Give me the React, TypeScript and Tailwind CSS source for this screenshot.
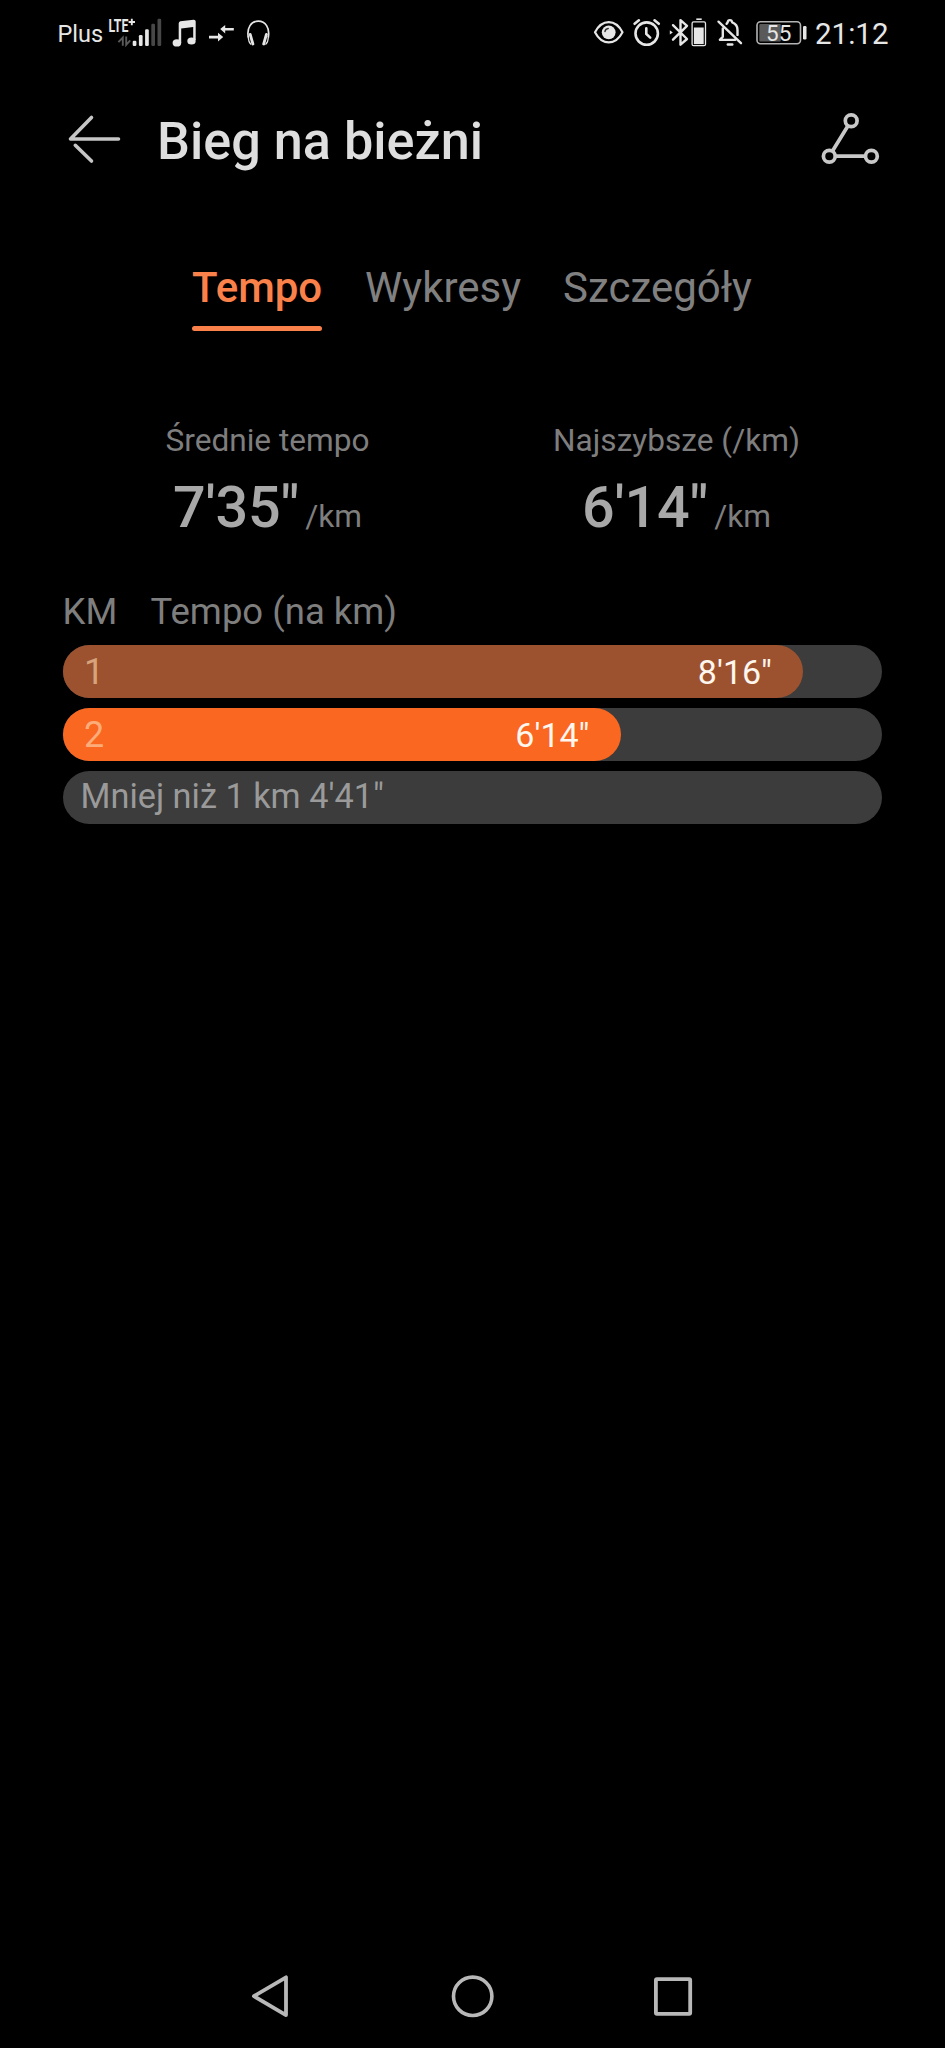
import React from "react";

const INK = "#e6e6e6";

function Signal() {
  return (
    <svg width="58" height="40" viewBox="107 14 58 40" className="shrink-0">
      <text x="108.6" y="31.8" fontSize="17.5" fontWeight="700" fill={INK} textLength="19.8" lengthAdjust="spacingAndGlyphs">LTE</text>
      <path d="M128.6 22h6.4M131.8 18.8v6.4" stroke={INK} strokeWidth="1.9" />
      <path d="M122.8 45.8V37.6l-4.4 4.6M126.2 36.6v8.2l4-4.4" stroke="#5a5a5a" strokeWidth="1.9" fill="none" />
      <g fill={INK}>
        <rect x="132.7" y="40.8" width="3.7" height="5.1" rx="1.2" />
        <rect x="138.9" y="35" width="3.7" height="10.9" rx="1.2" />
        <rect x="145.1" y="29.3" width="3.7" height="16.6" rx="1.2" />
      </g>
      <g fill="#474747">
        <rect x="151.3" y="23.8" width="3.7" height="22.1" rx="1.2" />
        <rect x="157.5" y="18.8" width="3.7" height="27.1" rx="1.2" />
      </g>
    </svg>
  );
}

function Music() {
  return (
    <svg width="40" height="40" viewBox="165 14 40 40" className="shrink-0" fill={INK}>
      <path d="M178.7 23.2q.1-1.6 1.7-1.9l13.2-1.6q2.1-.1 2.1 1.8V40h-2.5V27l-12 1.5V43h-2.5z" />
      <ellipse cx="176.9" cy="42.9" rx="4.3" ry="3.6" />
      <ellipse cx="191.5" cy="40.9" rx="4.2" ry="3.5" />
    </svg>
  );
}

function DataArrows() {
  return (
    <svg width="35" height="40" viewBox="205 14 35 40" className="shrink-0" fill={INK}>
      <path d="M209 35.8h9v-3l5.2 4.3-5.2 4.3v-3h-9zM233.8 27.9h-8.6v-3l-5 4.2 5 4.3v-3h8.6z" />
    </svg>
  );
}

function Headphones() {
  return (
    <svg width="35" height="40" viewBox="240 14 35 40" className="shrink-0" fill="none" stroke={INK}>
      <path d="M248.3 37.5c-1.8-10 3-16.3 10-16.3s11.8 6.3 10 16.3" strokeWidth="1.7" />
      <path d="M250.2 34.4l2.7 9.6M266.4 34.4l-2.7 9.6" strokeWidth="2.8" strokeLinecap="round" />
      <path d="M248.3 36q-.3 5.6 2.8 8.6M268.3 36q.3 5.6-2.8 8.6" strokeWidth="1.2" />
    </svg>
  );
}

function Eye() {
  return (
    <svg width="38" height="40" viewBox="590 14 38 40" className="shrink-0">
      <path d="M595 32.3C602 18.8 615.5 18.8 622.5 32.3C615.5 45.8 602 45.8 595 32.3Z" fill="none" stroke={INK} strokeWidth="2.2" strokeLinejoin="round" />
      <circle cx="608.7" cy="32.3" r="6.9" fill={INK} />
      <path d="M605 31.5q.4-2.5 3.2-2.9" fill="none" stroke="#333" strokeWidth="1.5" strokeLinecap="round" />
    </svg>
  );
}

function Alarm() {
  return (
    <svg width="37" height="40" viewBox="628 14 37 40" className="shrink-0" fill="none" stroke={INK} strokeWidth="2.6" strokeLinecap="round">
      <circle cx="646.7" cy="33.6" r="11.2" />
      <path d="M634.6 23.8l4.3-3.5M658.8 23.8l-4.3-3.5M646.3 28.3v5.7l3.9 3.6" />
    </svg>
  );
}

function Bluetooth() {
  return (
    <svg width="45" height="40" viewBox="665 14 45 40" className="shrink-0">
      <path d="M673 25.2l14 13.8-6.5 5.7V20.1l6.5 5.7-14 13.9" fill="none" stroke={INK} strokeWidth="2.4" strokeLinejoin="round" strokeLinecap="round" />
      <path d="M669.8 30.3l3 2.1-3 2.1z" fill={INK} />
      <rect x="692.1" y="21.9" width="13.4" height="23.8" rx="1.5" fill="none" stroke={INK} strokeWidth="1.3" />
      <rect x="693.9" y="27.5" width="9.8" height="16.6" fill={INK} />
      <rect x="696.3" y="18.4" width="5.4" height="1.6" fill={INK} />
    </svg>
  );
}

function BellOff() {
  return (
    <svg width="40" height="40" viewBox="710 14 40 40" className="shrink-0" fill="none" stroke={INK} strokeWidth="2.4" strokeLinecap="round" strokeLinejoin="round">
      <path d="M718.5 21.7l22.5 21.5M722.8 28.5v8.2l-2.9 3.2h15M726.6 23.7l1-1.3q.3-2.3 2.3-2.3t2.3 2.3q5.3 2 5.3 7.5v5" />
      <path d="M727.8 44.5h4.5" />
    </svg>
  );
}

function Battery() {
  return (
    <svg width="65" height="40" viewBox="750 14 65 40" className="shrink-0">
      <rect x="757" y="21.7" width="43.5" height="22" rx="3.5" fill="none" stroke="#b4b4b4" strokeWidth="1.6" />
      <rect x="759.3" y="24" width="21.5" height="17.4" rx="1" fill="#5a5a5a" />
      <rect x="803" y="26" width="3.5" height="13.5" rx="1.2" fill={INK} />
      <text x="766" y="40.6" fontSize="22.5" fill={INK}>55</text>
    </svg>
  );
}

function StatusBar() {
  return (
    <div className="flex h-[68px] items-center text-[#e6e6e6]">
      <span className="ml-[57.5px] w-[49.5px] text-[23.5px] leading-[32px]">Plus</span>
      <Signal />
      <Music />
      <DataArrows />
      <Headphones />
      <div className="ml-auto flex w-[355px] items-center">
        <Eye />
        <Alarm />
        <Bluetooth />
        <BellOff />
        <Battery />
        <span className="text-[29.5px] leading-[34px]">21:12</span>
      </div>
    </div>
  );
}

function Header() {
  return (
    <header className="flex h-[146px] items-center pl-[60px] pr-[65px]">
      <svg width="70" height="60" viewBox="60 111 70 60" className="shrink-0" fill="none" stroke="#c6c6c6" strokeWidth="3.6" strokeLinecap="round" strokeLinejoin="round">
        <path d="M118.5 139H70.5L91.5 117.5M75.3 145.3L91.5 161" />
      </svg>
      <h1 className="ml-[27px] whitespace-nowrap pt-px text-[52.2px] font-medium leading-[60px] text-[#dedede]">Bieg na bieżni</h1>
      <svg width="70" height="60" viewBox="810 111 70 60" className="ml-auto shrink-0" fill="none" stroke="#c8c8c8" strokeWidth="3.7">
        <circle cx="851.2" cy="120.7" r="5.9" />
        <circle cx="829.3" cy="156.2" r="5.9" />
        <circle cx="871.4" cy="156.2" r="5.9" />
        <path d="M848 125.8L832.5 151M835.2 156.2H865.5" />
      </svg>
    </header>
  );
}

function Tabs() {
  return (
    <nav className="mt-[50px] flex pl-[192px] text-[42px] leading-[48px] text-[#808080]">
      <div className="w-[130px] whitespace-nowrap text-[#fb814a]">
        <div className="font-medium">Tempo</div>
        <div className="mt-[13.5px] h-[5.5px] rounded-full bg-[#fb814a]" />
      </div>
      <div className="ml-[43px] w-[156px] whitespace-nowrap">Wykresy</div>
      <div className="ml-[42px] whitespace-nowrap">Szczegóły</div>
    </nav>
  );
}

function Stat({ label, value }: { label: string; value: string }) {
  return (
    <div className="flex w-[409px] flex-col items-center whitespace-nowrap">
      <div className="text-[31.6px] leading-[40px] text-[#7e7e7e]">{label}</div>
      <div className="mt-[13px] flex h-[67px] items-baseline leading-[68px]">
        <span className="text-[57.5px] font-medium text-[#a8a8a8]">{value}</span>
        <span className="ml-[6px] text-[31.6px] text-[#7e7e7e]">/km</span>
      </div>
    </div>
  );
}

function Fill({ km, pace, tone }: { km: string; pace: string; tone: string }) {
  return (
    <div className={`flex h-full items-center justify-between rounded-full pl-[21px] pr-[31px] pt-[2px] ${tone}`}>
      <span className="text-[36px] leading-[50px] text-[#ffdcb4]/60">{km}</span>
      <span className="text-[34px] leading-[50px] text-[#fff6ee]">{pace}</span>
    </div>
  );
}

export default function App() {
  return (
    <div className="flex h-[2048px] w-[945px] flex-col overflow-hidden bg-black font-['Roboto',sans-serif]">
      <StatusBar />
      <Header />
      <Tabs />
      <section className="mt-[90px] flex px-[63px]">
        <Stat label="Średnie tempo" value={"7'35\""} />
        <Stat label="Najszybsze (/km)" value={"6'14\""} />
      </section>
      <div className="mt-[48.5px] flex pl-[62.5px] text-[36.5px] leading-[44px] text-[#7e7e7e]">
        <div className="w-[88px]">KM</div>
        <div className="whitespace-nowrap">Tempo (na km)</div>
      </div>
      <section className="mx-[63px] mt-[11.5px] flex flex-col gap-[10.5px]">
        <div className="h-[52.5px] rounded-full bg-[#3c3c3c]">
          <Fill km="1" pace={"8'16\""} tone="w-[740px] bg-[#9d522f]" />
        </div>
        <div className="h-[52.5px] rounded-full bg-[#3c3c3c]">
          <Fill km="2" pace={"6'14\""} tone="w-[557.5px] bg-[#fa6721]" />
        </div>
        <div className="h-[52.5px] whitespace-nowrap rounded-full bg-[#3c3c3c] pl-[17.5px] text-[34.3px] leading-[50px] text-[#9a9a9a]">
          Mniej niż 1 km 4'41"
        </div>
      </section>
      <div className="mt-auto flex h-[104px] items-center pl-[250px]">
        <svg width="40" height="46" viewBox="250 1973 40 46" fill="none" stroke="#b8b8b8" strokeWidth="3.8" strokeLinejoin="round">
          <path d="M253.9 1996.2L286 1977.3V2015.1Z" />
        </svg>
        <svg width="46" height="46" viewBox="450 1973 46 46" className="ml-[160px]" fill="none" stroke="#b8b8b8" strokeWidth="3.6">
          <circle cx="472.7" cy="1996.3" r="19.2" />
        </svg>
        <svg width="43" height="46" viewBox="652 1973 43 46" className="ml-[156px]" fill="none" stroke="#b8b8b8" strokeWidth="3.8" strokeLinejoin="round">
          <rect x="655.9" y="1979.2" width="34.3" height="34.6" rx="1" />
        </svg>
      </div>
    </div>
  );
}
